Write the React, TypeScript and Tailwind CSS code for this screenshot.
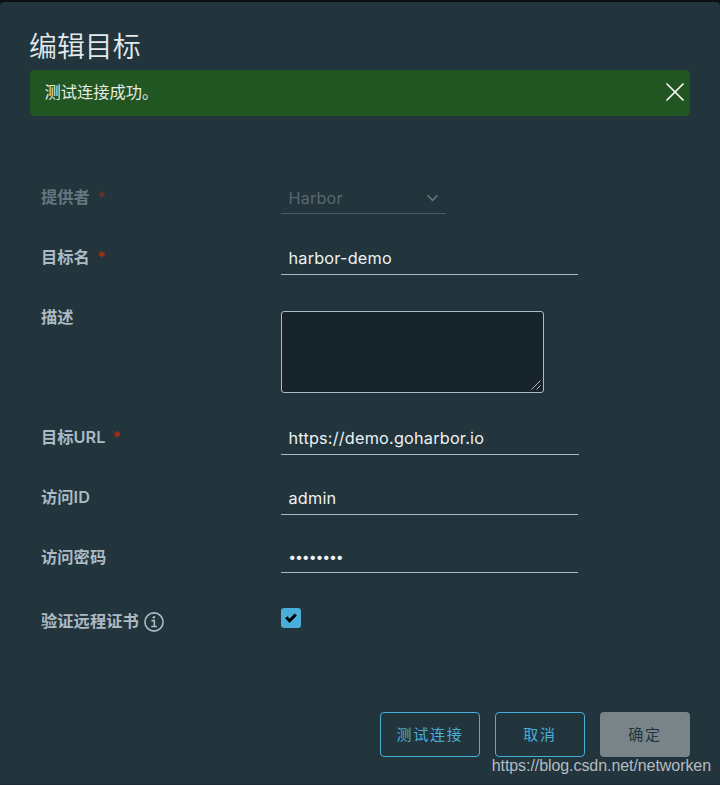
import type { ReactNode } from "react";

function Field({
  label,
  required,
  faded,
  height = "h-[60px]",
  labelPad = "pt-[5px]",
  children,
}: {
  label: ReactNode;
  required?: boolean;
  faded?: boolean;
  height?: string;
  labelPad?: string;
  children: ReactNode;
}) {
  return (
    <div className={`flex ${height}`}>
      <div className={`w-[240px] shrink-0 ${labelPad} ${faded ? "opacity-50" : ""}`}>
        <div className="flex h-6 items-center font-semibold tracking-[0.05px] text-[#acbac3]">
          {label}
          {required && <span className="ml-[7px] text-[16px] font-semibold text-[#b32a10]">*</span>}
        </div>
      </div>
      {children}
    </div>
  );
}

function TextValue({ children, size = "h-[35px] w-[297px]" }: { children: ReactNode; size?: string }) {
  return (
    <div className={`flex items-start border-b border-[#acbac3] pl-[7.5px] pt-[6px] font-normal tracking-[0.2px] text-[#eef2f5] ${size}`}>
      {children}
    </div>
  );
}

export default function App() {
  return (
    <div className="h-[785px] w-[720px] overflow-hidden bg-[#0b1013] pt-[2px] font-['Inter','Noto_Sans_CJK_SC',sans-serif] text-[16.25px] leading-6">
      <div className="relative flex h-[783px] flex-col rounded-t-[4px] border-b border-[#1b2a34] bg-[#22343c] px-[30px] pt-[26px]">
        <h1 className="-ml-px h-[42px] text-[27.9px] font-[350] leading-[38px] text-[#e3e9ec]">编辑目标</h1>

        <div className="flex h-[46px] shrink-0 items-start justify-between rounded-[4px] bg-[#215521] pl-[14.5px] pr-[6px] pt-[10px] text-[#e6ece6]">
          <span>测试连接成功。</span>
          <svg className="mt-[3px]" width="18" height="18" viewBox="0 0 18 18" fill="none" stroke="#fafafa" strokeWidth="1.7" strokeLinecap="round">
            <path d="M1 1l16 16M17 1L1 17" />
          </svg>
        </div>

        <div className="mt-[64px] pl-[11px]">
          <Field label="提供者" required faded>
            <div className="flex h-[34px] w-[165px] items-start justify-between border-b border-[#4b5b64] pl-[7.5px] pr-[7px] pt-[6px] font-normal tracking-[0.15px] text-[#596871]">
              <span>Harbor</span>
              <svg className="mt-[8px]" width="13" height="8" viewBox="0 0 13 8" fill="none" stroke="#66757d" strokeWidth="1.6">
                <path d="M1.5 1.3l5 5 5-5" />
              </svg>
            </div>
          </Field>
          <Field label="目标名" required>
            <TextValue>harbor-demo</TextValue>
          </Field>
          <Field label="描述" height="h-[120px]">
            <div className="mt-[11px] flex h-[82px] w-[263px] items-end justify-end rounded-[3px] border border-[#acbac3] bg-[#18242b] p-[2px]">
              <svg width="10" height="10" viewBox="0 0 10 10" stroke="#c4c8ca" strokeWidth="0.9">
                <path d="M.5 9.5l9-9M5.5 9.5l4-4" />
              </svg>
            </div>
          </Field>
          <Field label="目标URL" required>
            <TextValue size="h-[35px] w-[298px]">https://demo.goharbor.io</TextValue>
          </Field>
          <Field label="访问ID">
            <TextValue>admin</TextValue>
          </Field>
          <Field label="访问密码">
            <TextValue size="h-[33px] w-[297px]">
              <span className="-mt-px text-[14px] font-medium tracking-[-0.67px]">••••••••</span>
            </TextValue>
          </Field>
          <Field
            labelPad="pt-[9px]"
            label={
              <>
                验证远程证书
                <svg className="ml-[5px] mt-px" width="20" height="20" viewBox="0 0 20 20" fill="none" stroke="#acbac3" strokeWidth="1.6">
                  <circle cx="10" cy="10" r="9.1" />
                  <path d="M7.5 8.6h2.8v5.7M7.2 14.5h5.8" />
                  <circle cx="9.9" cy="5.3" r="1.2" fill="#acbac3" stroke="none" />
                </svg>
              </>
            }
          >
            <div className="mt-[8px] flex h-5 w-5 items-center justify-center rounded-[3px] bg-[#49afd9]">
              <svg className="-mt-px" width="12" height="10" viewBox="0 0 12 10" fill="none" stroke="#000" strokeWidth="2.9">
                <path d="M1.2 4.3l3.4 3.5 6.2-6.4" />
              </svg>
            </div>
          </Field>
        </div>

        <div className="mt-[52px] flex h-[45px] justify-end gap-[15px] text-[15px] tracking-[1.8px]">
          <button className="w-[100px] rounded-[4px] border border-[#49afd9] text-[#49afd9]">测试连接</button>
          <button className="w-[90px] rounded-[4px] border border-[#49afd9] text-[#49afd9]">取消</button>
          <button className="w-[90px] rounded-[4px] bg-[#798488] text-[#22343c]">确定</button>
        </div>
        <div className="absolute right-[9px] top-[752px] font-['Liberation_Sans',Arial,sans-serif] text-[16px] tracking-[-0.07px] text-[#b5bcc0]">
          https://blog.csdn.net/networken
        </div>
      </div>
    </div>
  );
}
